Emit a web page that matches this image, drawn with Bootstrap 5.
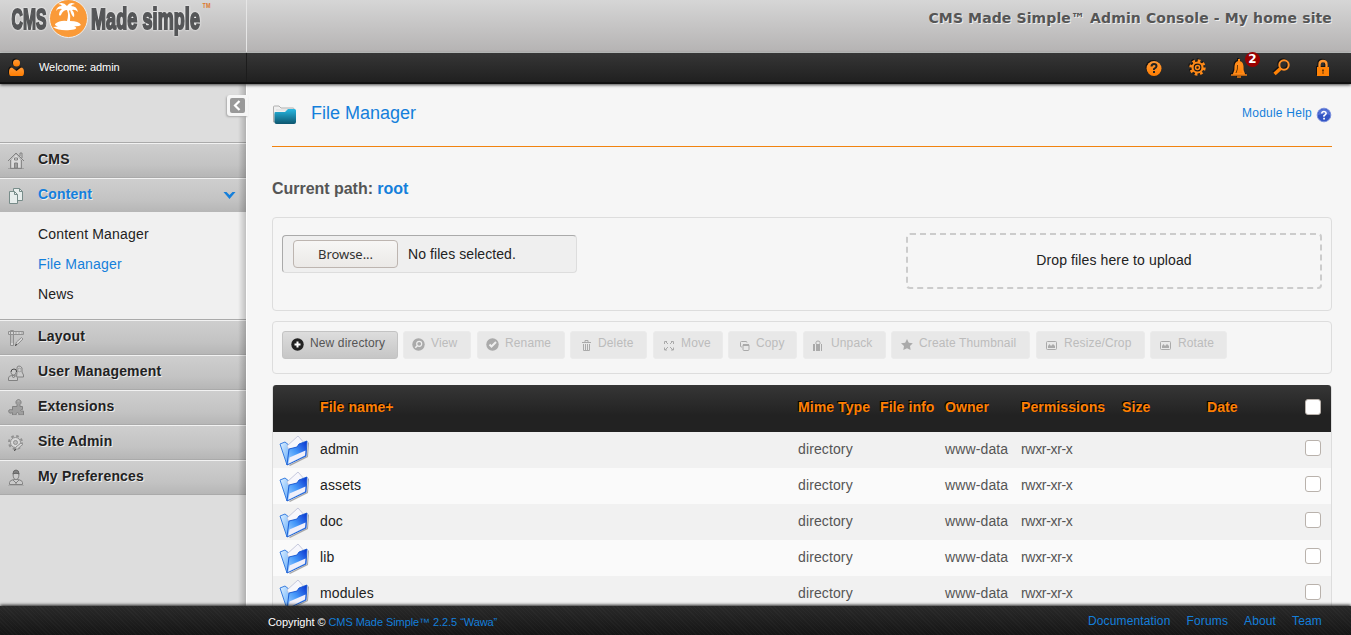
<!DOCTYPE html>
<html lang="en">
<head>
<meta charset="utf-8">
<title>CMS Made Simple Admin Console - My home site</title>
<meta name="viewport" content="width=device-width, initial-scale=1">
<link href="https://cdn.jsdelivr.net/npm/bootstrap@5.3.0/dist/css/bootstrap.min.css" rel="stylesheet">
<style>
body{font:14px/20px "Liberation Sans",Arial,sans-serif;letter-spacing:.12px;background:#f6f6f6;color:#222;height:100vh;overflow:hidden}
a{color:#147fdb;text-decoration:none}
.brandbar{height:53px;background:linear-gradient(#d6d6d6,#b5b3b3);border-bottom:1px solid #c9cdcc;flex:none}
.brandbar .logo-cell{width:247px;height:52px;border-right:1px solid #e6e6e6}
.console-title{font:bold 14px/20px "DejaVu Sans",Verdana,sans-serif;color:#555;text-shadow:1px 1px 0 #eee;letter-spacing:.12px;padding:8px 19px 0 0}
.userbar{height:31px;background:linear-gradient(#363636,#202020);border-bottom:2px solid #111;box-shadow:0 1px 3px #444;flex:none;z-index:5;position:relative}
.userbar .who{width:247px;height:29px;font-size:11px;letter-spacing:-.08px;border-right:1px solid #1c1c1c;color:#fff}
.userbar svg{filter:drop-shadow(-1px -1px 0 #111)}
.alerts-count{position:absolute;left:14px;top:-6px;width:15px;height:15px;border-radius:50%;background:#900;color:#fff;font:bold 12px/14px "DejaVu Sans",sans-serif;text-align:center;letter-spacing:0}
.side{width:247px;flex:none;background:#ddd;position:relative}
.side-shade{position:absolute;top:0;right:0;bottom:0;width:9px;background:linear-gradient(90deg,transparent,rgba(0,0,0,.2));border-right:1px solid #fff}
.collapser{position:absolute;right:-1px;top:11px;width:21px;height:21px;background:#f6f6f6;border-radius:3px 0 0 3px;box-shadow:-1px 1px 2px #aaa;padding:3px}
.menu-top{margin-top:58px}
.menu-item{height:35px;border-top:1px solid #aaa;box-shadow:inset 0 1px #f2f2f2;background:linear-gradient(#cfcfcf,#c3c3c3 65%,#b6b6b6);font-weight:bold;text-shadow:1px 1px 0 #eee;padding:0 11px 0 8px;letter-spacing:.18px}
.menu-item svg{margin-top:1px}
.menu-item svg:first-child{opacity:.85}
.menu-item .cap{margin:0 0 3px 14px}
.submenu{height:107px;background:#f0f0f0;padding:7px 0 0 38px;line-height:30px;letter-spacing:.17px}
.main-area{padding:0 19px 0 25px;min-width:0}
.page-head{height:63px;border-bottom:1px solid #f1830f}
.page-head h1{font-size:18px;line-height:22px;margin:0;letter-spacing:0}
.help-link{font-size:12px;letter-spacing:.24px}
.crumb{font-size:16px;line-height:20px;font-weight:bold;color:#555;margin:32px 0 18px;letter-spacing:-.03px}
.panel{border:1px solid #ddd;border-radius:4px}
.upload{height:94px;padding:15px 9px}
.picker{width:295px;height:38px;margin-top:2px;background:#efefef;border:1px solid #ddd;border-color:#aaa #ddd #ddd #aaa;border-radius:4px;padding-left:10px;letter-spacing:.07px}
.browse{width:105px;height:28px;margin-bottom:1px;border:1px solid #bdb5b0;border-radius:4px;background:linear-gradient(#f7f6f5,#ebe9e7);font:13px/26px "Noto Sans",sans-serif;text-align:center;color:#333;letter-spacing:-.05px;padding:0}
.drop{width:416px;height:56px;border:2px dashed #ccc;border-radius:4px;font-size:14px}
.tools{height:53px;margin-top:10px;padding:9px;display:grid;grid-template-columns:116px 69px 88px 78px 70px 70px 83px 140px 109px 77px;column-gap:5px;align-items:start}
.tool{height:28px;border:1px solid #ebebeb;border-radius:3px;background:#e8e8e8;color:#bcbcbc;font-size:12px;line-height:22px;padding:0 0 0 8px;text-align:left;display:flex;white-space:nowrap;letter-spacing:.13px}
.tool:nth-child(even):not(:last-child){margin-right:1px}
.tool svg{margin:6px 6px 0 0;flex:none;color:#aaa}
.tool.on{background:linear-gradient(#ddd,#c6c6c6);border-color:#c3c3c3;color:#555}
.tool.on svg{color:#222}
.files{table-layout:fixed;width:1060px;border-collapse:separate;border-spacing:0;margin-top:11px;border:1px solid #ddd;border-radius:4px 4px 0 0;border-top:0}
.files th{height:47px;background:linear-gradient(#363636,#222 65%);color:#ff7f00;text-shadow:-1px -1px 0 #000;padding:0 0 3px;white-space:nowrap;letter-spacing:.08px}
.files th:first-child{border-top-left-radius:3px}
.files th:last-child{border-top-right-radius:3px}
.files td{height:36px;padding:0 0 2px;background:#f1f1f1;color:#555;vertical-align:middle}
.files td:nth-child(2){color:#222}
.files td:nth-child(6){letter-spacing:-.32px}
.files tr:nth-child(even) td{background:#fafafa}
.files td:first-child{padding:0 0 0 6px}
.files td svg{display:block;margin-top:2px}
.tick{appearance:none;display:block;width:16px;height:16px;border:1px solid #b9b2ac;border-radius:3px;background:#fff;margin:0 0 2px 11px}
.files th .tick{margin:0 0 0 11px}
.foot{height:29px;flex:none;position:relative;z-index:6;background:repeating-linear-gradient(45deg,rgba(255,255,255,.025) 0 1px,transparent 1px 3px),linear-gradient(#292929,#151515);box-shadow:0 -1px 3px #222;padding:0 29px 0 268px;color:#fff}
.foot .copy{font-size:11px;letter-spacing:-.07px;padding-top:3px}
.foot .links{font-size:12px;gap:16px;letter-spacing:.14px}
</style>
</head>
<body class="d-flex flex-column">
<svg width="0" height="0" class="position-absolute">
<defs>
<linearGradient id="or" x1="0" y1="0" x2="0" y2="1"><stop stop-color="#ff9a38"/><stop offset="1" stop-color="#ff7d00"/></linearGradient>
<linearGradient id="blueA" x1="0" y1="0" x2="1" y2="1"><stop stop-color="#e2f2ff"/><stop offset="1" stop-color="#58a6fa"/></linearGradient>
<linearGradient id="blueB" x1="0" y1="1" x2="1" y2="0"><stop stop-color="#b3ddff"/><stop offset=".5" stop-color="#4497f9"/><stop offset="1" stop-color="#0730cf"/></linearGradient>
<linearGradient id="teal" x1="0" y1="0" x2="0" y2="1"><stop stop-color="#28b8e2"/><stop offset="1" stop-color="#0d566f"/></linearGradient>
</defs>
<symbol id="folder" viewBox="0 0 30 32">
<path d="M10 30 28 21l1-14 1 1-1 14L11 31z" fill="#888" opacity=".7"/>
<path d="M1 9 6 7l5 4v15l-3 4z" fill="url(#blueA)" stroke="#3b7fe0"/>
<path d="m8 11 11-10 8 9-13 12z" fill="#f7f7fc" stroke="#b9bdd4" stroke-width=".8"/>
<path d="m10 14 8-2 2-3 8-3-1 15L8 30z" fill="url(#blueB)" stroke="#1355d0" stroke-width=".9"/>
<path d="m10.500 22.500 16-7-.5 5L9.500 28.500z" fill="#f0effa"/>
</symbol>
</svg>

<header class="brandbar d-flex justify-content-between">
<div class="logo-cell">
<svg width="246" height="52" viewBox="0 0 246 52">
<g font-family="'Liberation Sans Narrow','Liberation Sans',sans-serif" font-weight="bold" fill="#555658" stroke="#555658" stroke-width="1.5" style="paint-order:stroke;filter:drop-shadow(0 0 1px #fff)">
<text transform="translate(11.500 28.500) scale(1 1.34)" font-size="22" textLength="35" lengthAdjust="spacingAndGlyphs">CMS</text>
<text transform="translate(91 28.500) scale(1 1.38)" font-size="22" textLength="109" lengthAdjust="spacingAndGlyphs">Made simple</text>
</g>
<circle cx="68.500" cy="18.500" r="19" fill="#fa9a38" stroke="#eee" stroke-width="1"/>
<path d="M55 24q5-4 12-3 2-6 0-11-4 0-6 5-1 1-2 0 0-4 3-6-4-1-6 2 1-5 6-5-1-2-4-2 5-3 9 2 3-5 8-2-3 0-4 2 6 0 7 6-3-3-6-2 3 3 2 7-2 0-4-7l-1 1q2 5 1 10 9 0 11 4-3 2-7 1 6 3-4 4-11 1-17-3 4 0 5-1-3 0-3-2" fill="#fff"/>
<text x="202.500" y="8" font-family="Liberation Sans" font-weight="bold" font-size="8" textLength="8" lengthAdjust="spacingAndGlyphs" fill="#dd772b">TM</text>
</svg>
</div>
<div class="console-title">CMS Made Simple™ Admin Console - My home site</div>
</header>

<div class="userbar d-flex justify-content-between">
<div class="who d-flex align-items-center">
<svg width="16" height="17" class="ms-2 me-3" viewBox="0 0 16 17" fill="url(#or)"><circle cx="8.500" cy="4" r="3.500"/><path d="M4 8.500 8.500 12 13 8.500q3 0 3 4.500 0 4-2 4H3q-2 0-2-4 0-4.500 3-4.500"/></svg>
<span style="margin:-2px 0 0 -1px">Welcome: admin</span>
</div>
<div class="d-flex align-items-center" style="padding-right:21px;gap:27px">
<svg width="16" height="16" viewBox="0 0 16 16"><circle cx="8" cy="8.500" r="7.500" fill="url(#or)"/><path d="M5.500 6.500Q5.500 4 8 4t2.500 2.200Q10.500 7.500 8 9v1" fill="none" stroke="#222" stroke-width="2"/><rect x="7" y="11" width="2" height="2" fill="#222"/></svg>
<svg width="17" height="17" viewBox="0 0 17 17"><g stroke="#ff8a18" fill="none"><circle cx="8.500" cy="8.500" r="5" stroke-width="2.200"/><circle cx="8.500" cy="8.500" r="6.900" stroke-width="2.600" stroke-dasharray="2.700 2.719"/><circle cx="8.500" cy="8.500" r="2" stroke-width="1.500"/></g></svg>
<span class="position-relative d-block" style="width:16px;height:20px;margin:0 -1px 0 -2px"><svg class="d-block" width="16" height="20" viewBox="0 0 16 20"><path d="M8 1v3M3 16Q5 12 4.500 8 5 4 8 4t3.500 4Q11 12 13 16z" fill="url(#or)" stroke="#ff8a18" stroke-width="2"/><path d="M0 17h16M6 19h4" stroke="#e87912" stroke-width="1.500"/><path d="M5 15q2-4 1.500-8" stroke="#6b3b07" fill="none"/></svg><span class="alerts-count">2</span></span>
<svg width="17" height="17" viewBox="0 0 17 17" fill="none"><circle cx="11" cy="6" r="4.700" stroke="#ff8f26" stroke-width="2"/><path d="m7.500 9.500-6 5.500" stroke="#ff8206" stroke-width="3.500"/></svg>
<svg width="14" height="18" viewBox="0 0 14 18" style="margin-left:-1px"><path d="M3.500 9V5.500Q3.500 2 7 2t3.500 3.500V9" fill="none" stroke="#ff9630" stroke-width="2.300"/><path d="M1 8h12v9H1z" fill="#ff8206"/><path d="M7 10.500v4" stroke="#5c3005" stroke-width="1.800" stroke-dasharray="2 1"/></svg>
</div>
</div>

<div class="d-flex flex-grow-1" style="min-height:0">
<nav class="side">
<div class="menu-top">
<div class="menu-item d-flex align-items-center"><svg width="16" height="17" viewBox="0 0 16 17" fill="none" stroke="#777"><path d="M0 9 8 1l8 8M12 4V1h2v5M2.500 8v8.500h11V8" /><path d="M8 2 3 8v8h10V8z" fill="#e0e0e0" stroke="#999" stroke-width=".6"/><path d="M6.500 16v-5h3v5z" fill="#999"/><path d="M6.500 6h3v2h-3z"/><path d="M0 16.500h16" opacity=".5"/></svg><span class="cap">CMS</span></div>
<div class="menu-item d-flex align-items-center"><svg width="16" height="16" viewBox="0 0 16 16" fill="#eef5f4" stroke="#6b8380"><path d="M5.500.5h6l3 3v9h-9z"/><path d="M11.500.5v3h3" fill="none"/><path d="M1.500 3.500h5l3 3v9h-8z"/><path d="M6.500 3.500v3h3" fill="none"/></svg><a href="#" class="cap">Content</a><svg class="ms-auto" width="13" height="9" viewBox="0 0 13 9"><path d="M.5 1h3l3 3 3-3h3l-6 7z" fill="#147fdb"/></svg></div>
<div class="submenu"><div>Content Manager</div><div><a href="#">File Manager</a></div><div>News</div></div>
<div class="menu-item d-flex align-items-center"><svg width="16" height="16" viewBox="0 0 16 16" fill="#d8d8d8" stroke="#888"><path d="M2.500.5h3v15h-3zM.5 1.500h15v3H.5z"/><path d="M3 6h2M3 8h2M3 10h2M3 12h2M8 2v2M11 2v2M14 2v2" stroke-width=".7"/><path d="m7.500 15 1-3 5-4.500 1.500 1.500-5 5z"/><path d="m7 15.500 2-1" stroke="#222"/></svg><span class="cap">Layout</span></div>
<div class="menu-item d-flex align-items-center"><svg width="16" height="16" viewBox="0 0 16 16" fill="#ccc" stroke="#777"><path d="M9 7V3q0-2 2-2t3 2v4l1.500 3v2h-7z"/><circle cx="11.500" cy="5" r="1.800" stroke="#999"/><path d="M.5 15.500V13q0-2 3-2.500h3q3 .5 3 2.500v2.500z"/><circle cx="5.500" cy="7.500" r="2.500"/><path d="M3 7q0-3 3-3t2.500 3" stroke="#333"/><path d="m4 11 1.500 2L7 11" fill="none"/></svg><span class="cap">User Management</span></div>
<div class="menu-item d-flex align-items-center"><svg width="16" height="17" viewBox="0 0 16 17" fill="#999" stroke="#777"><path d="M4.500 7.500h4.500V5.500Q7.500 4.500 8 2.500 9 .500 10.500.500T13 2.500Q13.500 4.500 12 5.500v2h2.500v3q-2 0-2 1t3 .500v4h-4.500q0-2.500-1.500-2.500T8 16H4.500v-2.500q-1.500 1-3 .500-1.500-1.500-.500-3 1.500-1 3.500 0z"/><path d="M9.500 2h2M1 16.500h15" stroke="#bbb"/></svg><span class="cap">Extensions</span></div>
<div class="menu-item d-flex align-items-center"><svg width="16" height="16" viewBox="0 0 16 16" fill="none" stroke="#888"><circle cx="7.500" cy="7.500" r="6.500" stroke-width="2" stroke-dasharray="2.600 2.500"/><circle cx="7.500" cy="7.500" r="5" fill="#ddd"/><circle cx="7.500" cy="7.500" r="2" fill="#bbb"/><path d="m7 14 1-2 5-4 1.500 1.500-5 4.500z" fill="#ddd"/><path d="m6 15.500 2-1" stroke="#222"/></svg><span class="cap">Site Admin</span></div>
<div class="menu-item d-flex align-items-center"><svg width="16" height="17" viewBox="0 0 16 17" fill="#ccc" stroke="#777"><path d="M1.500 15.500v-2q0-2 4-3h5q4 1 4 3v2z"/><path d="M5 4.500h6q0 6-3 6t-3-6"/><path d="M5 5q0-4 3-4t3 4q-3-2-6 0" fill="#777" stroke="#555"/><path d="m5 11 3 3 3-3M8 13v3" fill="none"/><path d="M0 16.500h16" stroke="#aaa"/></svg><span class="cap">My Preferences</span></div>
<div style="height:1px;background:#aaa"></div>
</div>
<div class="side-shade"></div>
<div class="collapser"><svg class="d-block" width="16" height="16" viewBox="0 0 16 16"><rect width="15" height="15" rx="2" fill="#999"/><path d="M9.500 3 5 7.500 9.500 12" fill="none" stroke="#fff" stroke-width="2.200"/></svg></div>
</nav>

<main class="main-area flex-grow-1">
<div class="page-head d-flex justify-content-between">
<div class="d-flex" style="padding-top:18px"><svg width="26" height="22" viewBox="0 0 26 22" style="margin:2px 14px 0 -1px"><path d="M2.500 18V3q0-1 1-1H8l2 2h12q1 0 1 1v5H4v8z" fill="#f0f0f0" stroke="#b0b0b0"/><path d="M5 6h14" stroke="#ddd"/><path d="M3.500 9q0-1 1-1H14l3-3h6.500q1.500 0 1.500 1.500V18q0 2-2 2h-17.500q-2 0-2-2z" fill="url(#teal)"/></svg><h1><a href="#">File Manager</a></h1></div>
<div class="d-flex help-link" style="padding-top:19px"><a href="#">Module Help</a><svg width="16" height="16" viewBox="0 0 16 16" style="margin:4px 0 0 4px"><circle cx="8" cy="8" r="6.800" fill="#3355c4" stroke="#7a8fdd"/><path d="M2 8a6 6 0 0 1 12 0q-5-2-12 0" fill="#6582df" opacity=".7"/><path d="M5.700 6.500Q6 4.500 8 4.500t2.200 1.800Q10.200 7.500 8 8.700v1" fill="none" stroke="#fff" stroke-width="1.600"/><rect x="7.200" y="10.800" width="1.700" height="1.700" fill="#fff"/></svg></div>
</div>
<div class="crumb">Current path: <a href="#">root</a></div>
<section class="panel upload d-flex justify-content-between">
<div class="picker d-flex align-items-center"><button class="browse">Browse...</button><span style="margin-left:10px">No files selected.</span></div>
<div class="drop d-flex align-items-center justify-content-center"><span style="margin-top:-3px">Drop files here to upload</span></div>
</section>
<section class="panel tools">
<button class="tool on"><svg width="13" height="13" viewBox="0 0 13 13"><circle cx="6.500" cy="6.500" r="6.200" fill="currentColor"/><path d="M6.500 3.500v6M3.500 6.500h6" stroke="#fff" stroke-width="2"/></svg>New directory</button>
<button class="tool"><svg width="13" height="13" viewBox="0 0 13 13"><circle cx="6.500" cy="6.500" r="6.200" fill="currentColor"/><circle cx="7.200" cy="5.800" r="2.500" stroke="#eee" fill="none" stroke-width="1.200"/><path d="m5.500 7.500-2.200 2.200" stroke="#eee" stroke-width="1.500"/></svg>View</button>
<button class="tool"><svg width="13" height="13" viewBox="0 0 13 13"><circle cx="6.500" cy="6.500" r="6.200" fill="currentColor"/><path d="m3.500 6.500 2 2L10 4" stroke="#eee" fill="none" stroke-width="2"/></svg>Rename</button>
<button class="tool"><svg width="13" height="14" viewBox="0 0 13 14" style="margin-left:2px;margin-right:4px" fill="none" stroke="currentColor"><path d="M1 4.500h9M4 4V2.500h3V4M2.500 6v6.500h6V6M4.500 6v6M6.500 6v6"/></svg>Delete</button>
<button class="tool"><svg width="13" height="14" viewBox="0 0 13 14" fill="none" stroke="currentColor" style="margin-left:1px;margin-right:5px"><path d="M5 6 2 3M7 6l3-3M5 9l-3 3M7 9l3 3M1.500 6V3.500H4M8 3.500h2.500V6M1.500 9.500V12H4M8 12h2.500V9.500"/></svg>Move</button>
<button class="tool"><svg width="13" height="14" viewBox="0 0 13 14" fill="none" stroke="currentColor" style="margin-left:1px;margin-right:5px"><path d="M4 9H3.500q-1 0-1-1V4.500q0-1 1-1H8q1 0 1 1"/><rect x="5" y="6.500" width="6" height="6" rx="1"/><path d="M5 7h6" stroke-width="2"/></svg>Copy</button>
<button class="tool"><svg width="13" height="14" viewBox="0 0 13 14" fill="currentColor"><path d="M1 6h2v7H1zM4 6h4v7H4zM9 6h1v7H9z"/><path d="M4 6V4.500Q4 3 6 3t2 1.500V6" fill="none" stroke="currentColor"/></svg>Unpack</button>
<button class="tool"><svg width="13" height="13" viewBox="0 0 13 13" fill="currentColor"><path d="m7 1 1.800 3.700 4 .6L10 8l.6 4L7 10.200 3.300 12 4 8 1 5.300l4.200-.6z"/></svg>Create Thumbnail</button>
<button class="tool"><svg width="13" height="14" viewBox="0 0 13 14" fill="none" stroke="currentColor"><rect x="1.500" y="3.500" width="10" height="8" rx="1"/><path d="M3 10V8l1.500-2L6 8l2-2 2 2v2z" fill="currentColor" stroke="none"/></svg>Resize/Crop</button>
<button class="tool"><svg width="13" height="14" viewBox="0 0 13 14" fill="none" stroke="currentColor"><rect x="1.500" y="3.500" width="10" height="8" rx="1"/><path d="M3 10V8l1.500-2L6 8l2-2 2 2v2z" fill="currentColor" stroke="none"/></svg>Rotate</button>
</section>
<table class="files">
<colgroup><col style="width:47px"><col style="width:478px"><col style="width:82px"><col style="width:65px"><col style="width:76px"><col style="width:101px"><col style="width:85px"><col style="width:87px"><col style="width:37px"></colgroup>
<thead><tr><th></th><th>File name+</th><th>Mime Type</th><th>File info</th><th>Owner</th><th>Permissions</th><th>Size</th><th>Date</th><th><input type="checkbox" class="tick"></th></tr></thead>
<tbody>
<tr><td><svg width="30" height="32"><use href="#folder"/></svg></td><td>admin</td><td>directory</td><td></td><td>www-data</td><td>rwxr-xr-x</td><td></td><td></td><td><input type="checkbox" class="tick"></td></tr>
<tr><td><svg width="30" height="32"><use href="#folder"/></svg></td><td>assets</td><td>directory</td><td></td><td>www-data</td><td>rwxr-xr-x</td><td></td><td></td><td><input type="checkbox" class="tick"></td></tr>
<tr><td><svg width="30" height="32"><use href="#folder"/></svg></td><td>doc</td><td>directory</td><td></td><td>www-data</td><td>rwxr-xr-x</td><td></td><td></td><td><input type="checkbox" class="tick"></td></tr>
<tr><td><svg width="30" height="32"><use href="#folder"/></svg></td><td>lib</td><td>directory</td><td></td><td>www-data</td><td>rwxr-xr-x</td><td></td><td></td><td><input type="checkbox" class="tick"></td></tr>
<tr><td><svg width="30" height="32"><use href="#folder"/></svg></td><td>modules</td><td>directory</td><td></td><td>www-data</td><td>rwxr-xr-x</td><td></td><td></td><td><input type="checkbox" class="tick"></td></tr>
</tbody>
</table>
</main>
</div>

<footer class="foot d-flex align-items-center justify-content-between">
<div class="copy">Copyright © <a href="#">CMS Made Simple™ 2.2.5 “Wawa”</a></div>
<div class="links d-flex"><a href="#">Documentation</a><a href="#">Forums</a><a href="#">About</a><a href="#">Team</a></div>
</footer>
<script src="https://cdn.jsdelivr.net/npm/bootstrap@5.3.0/dist/js/bootstrap.bundle.min.js"></script>
</body>
</html>
